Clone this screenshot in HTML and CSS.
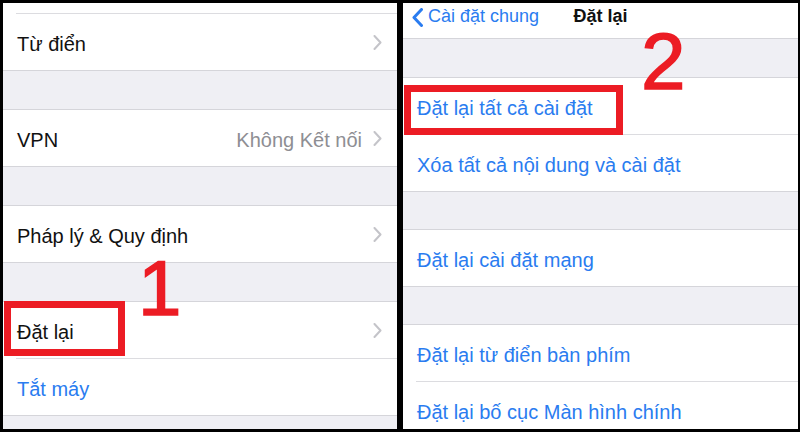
FILE: index.html
```html
<!DOCTYPE html>
<html lang="vi">
<head>
    <meta charset="UTF-8">
    <meta name="viewport" content="width=device-width, initial-scale=1.0">
    <title>Đặt lại</title>
    <link rel="stylesheet" href="styles.css">
</head>
<body>
    <div class="frame">
        <!-- left screen: Cài đặt chung -->
        <section class="panel">
            <div class="group no-top">
                <div class="stub"></div>
                <div class="sep"></div>
                <div class="row">
                    <span class="label">Từ điển</span>
                    <svg class="chev" width="9" height="15" viewBox="0 0 9 15"><polyline points="1.5,1 7.5,7.5 1.5,14"/></svg>
                </div>
            </div>
            <div class="gap"></div>
            <div class="group">
                <div class="row">
                    <span class="label">VPN</span>
                    <span class="value">Không Kết nối</span>
                    <svg class="chev" width="9" height="15" viewBox="0 0 9 15"><polyline points="1.5,1 7.5,7.5 1.5,14"/></svg>
                </div>
            </div>
            <div class="gap"></div>
            <div class="group">
                <div class="row">
                    <span class="label">Pháp lý &amp; Quy định</span>
                    <svg class="chev" width="9" height="15" viewBox="0 0 9 15"><polyline points="1.5,1 7.5,7.5 1.5,14"/></svg>
                </div>
            </div>
            <div class="gap"></div>
            <div class="group">
                <div class="row">
                    <span class="label">Đặt lại</span>
                    <svg class="chev" width="9" height="15" viewBox="0 0 9 15"><polyline points="1.5,1 7.5,7.5 1.5,14"/></svg>
                </div>
                <div class="sep"></div>
                <div class="row">
                    <span class="label link">Tắt máy</span>
                </div>
            </div>
        </section>

        <!-- right screen: Đặt lại -->
        <section class="panel panel-right">
            <div class="nav">
                <div class="back">
                    <svg width="11" height="19" viewBox="0 0 11 19"><polyline points="9.5,1.5 2,9.5 9.5,17.5"/></svg>
                    <span>Cài đặt chung</span>
                </div>
                <div class="title">Đặt lại</div>
                <div></div>
            </div>
            <div class="gap tall"></div>
            <div class="group">
                <div class="row"><span class="label link">Đặt lại tất cả cài đặt</span></div>
                <div class="sep"></div>
                <div class="row"><span class="label link">Xóa tất cả nội dung và cài đặt</span></div>
            </div>
            <div class="gap"></div>
            <div class="group">
                <div class="row"><span class="label link">Đặt lại cài đặt mạng</span></div>
            </div>
            <div class="gap"></div>
            <div class="group">
                <div class="row"><span class="label link">Đặt lại từ điển bàn phím</span></div>
                <div class="sep"></div>
                <div class="row"><span class="label link">Đặt lại bố cục Màn hình chính</span></div>
            </div>
        </section>

        <!-- annotations -->
        <div class="mark mark-1"></div>
        <div class="mark mark-2"></div>
        <div class="step step-1">1</div>
        <div class="step step-2">2</div>
    </div>
</body>
</html>
```

FILE: styles.css
```css
body {
    margin: 0;
    font-family: "Liberation Sans", Arial, sans-serif;
    background: #000;
}

.frame {
    position: relative;
    display: flex;
    gap: 6px;
    width: 800px;
    height: 432px;
    box-sizing: border-box;
    padding: 3px 2px 3px 3px;
    overflow: hidden;
}

.panel {
    flex: 0 0 394px;
    background: #efeff4;
    overflow: hidden;
}

.panel-right {
    flex-basis: 395px;
}

.group {
    background: #fff;
    border-top: 1px solid #d5d5da;
    border-bottom: 1px solid #d5d5da;
}

.group.no-top {
    border-top: none;
}

.stub {
    height: 10px;
}

.sep {
    height: 1px;
    margin-left: 13px;
    background: #dcdce0;
}

.gap {
    height: 38px;
}

.panel-right .gap {
    height: 37px;
}

.panel-right .gap.tall {
    height: 38px;
}

.row {
    display: flex;
    align-items: center;
    height: 56px;
    box-sizing: border-box;
    padding: 4px 15px 0 14px;
    font-size: 20px;
}

.label {
    flex: 1;
    color: #111;
}

.label.link {
    color: #2a7cf0;
}

.value {
    color: #8e8e93;
    margin-right: 11px;
}

.chev {
    margin-top: -3px;
}

.chev polyline {
    fill: none;
    stroke: #c4c4c9;
    stroke-width: 2;
    stroke-linecap: round;
    stroke-linejoin: round;
}

.nav {
    display: grid;
    grid-template-columns: 1fr auto 1fr;
    align-items: start;
    height: 36px;
    box-sizing: border-box;
    padding-top: 3px;
    background: #fff;
    border-bottom: 1px solid #d5d5da;
    font-size: 18px;
    line-height: 20px;
}

.back {
    display: flex;
    align-items: flex-start;
    gap: 5px;
    padding-left: 9px;
    color: #2a7cf0;
}

.back svg {
    margin-top: 2px;
}

.back polyline {
    fill: none;
    stroke: #2a7cf0;
    stroke-width: 3;
    stroke-linecap: round;
    stroke-linejoin: round;
}

.title {
    font-weight: bold;
    color: #111;
}

.mark {
    position: absolute;
    box-sizing: border-box;
    border: 7px solid #ec1c24;
}

.mark-1 {
    left: 4px;
    top: 301px;
    width: 121px;
    height: 55px;
}

.mark-2 {
    left: 404px;
    top: 85px;
    width: 219px;
    height: 50px;
}

.step {
    position: absolute;
    color: #ec1c24;
    line-height: 1;
    -webkit-text-stroke: 1.5px #ec1c24;
}

.step-1 {
    left: 138px;
    top: 249px;
    font-size: 78px;
}

.step-2 {
    left: 641px;
    top: 22px;
    font-size: 80px;
}
```
